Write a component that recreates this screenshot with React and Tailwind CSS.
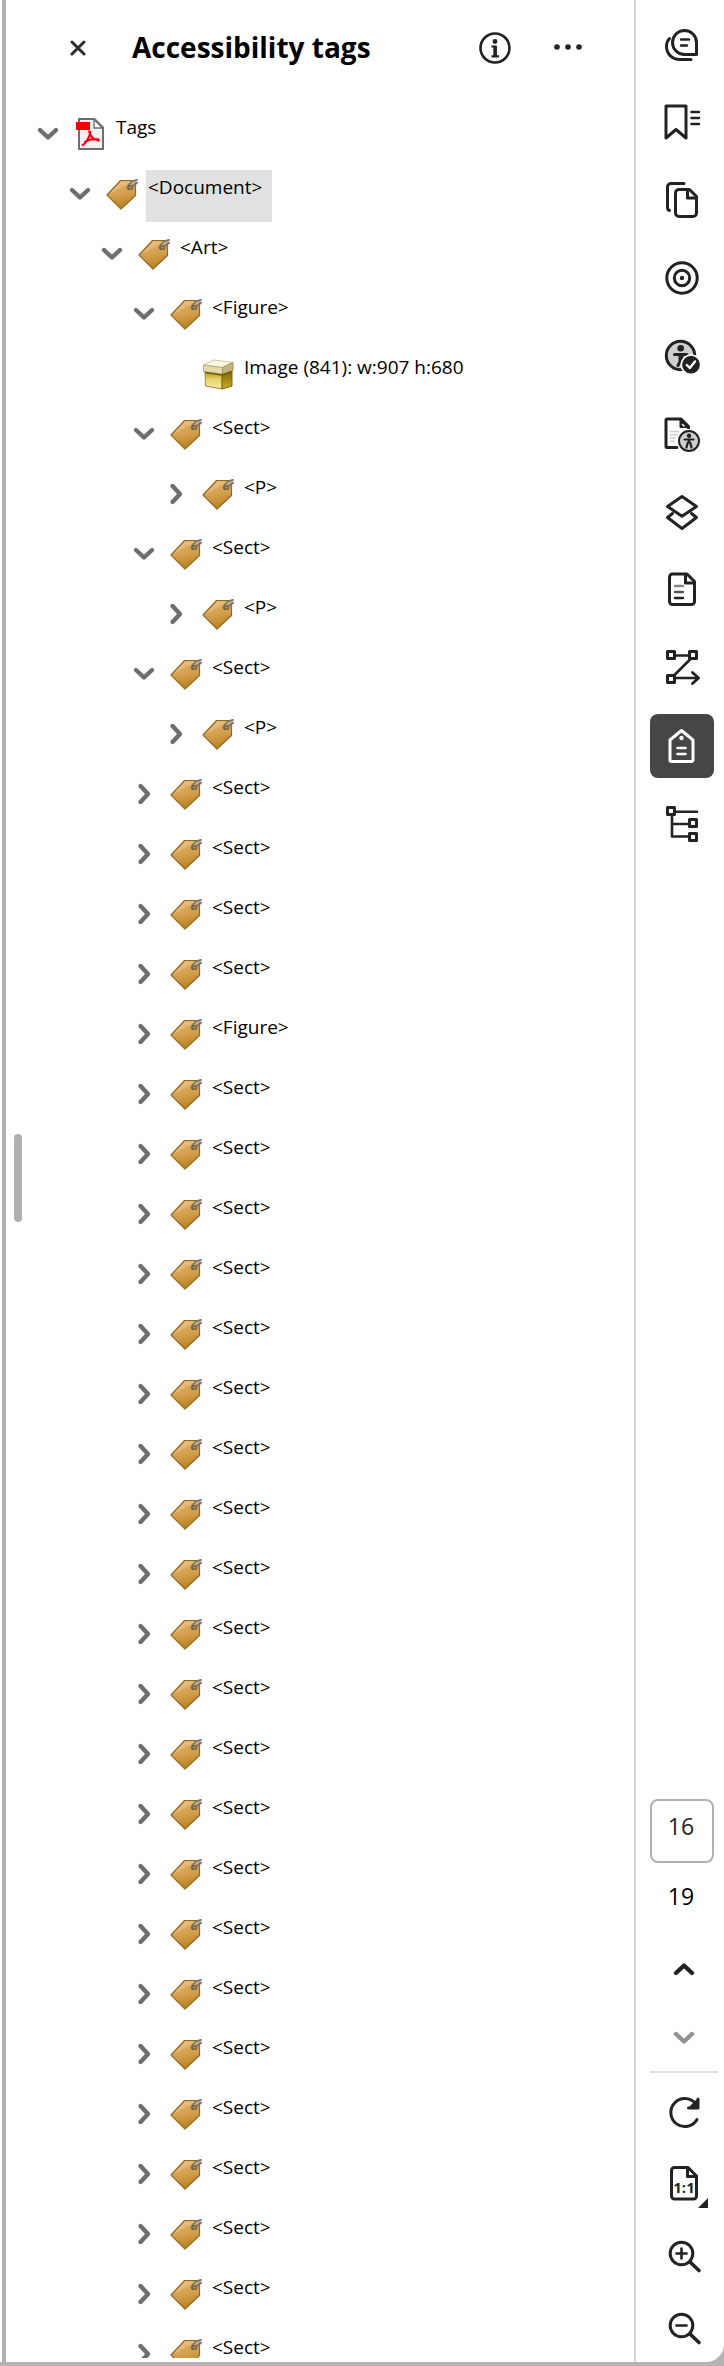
import { useState } from 'react';

const INDENT = ['pl-[10px]', 'pl-[42px]', 'pl-[74px]', 'pl-[106px]', 'pl-[138px]'];

const sects = (count) =>
  Array.from({ length: count }, () => ({ level: 3, label: '<Sect>', state: 'closed' }));

const rows = [
  { level: 0, label: 'Tags', state: 'open', icon: 'pdf' },
  { level: 1, label: '<Document>', state: 'open' },
  { level: 2, label: '<Art>', state: 'open' },
  { level: 3, label: '<Figure>', state: 'open' },
  { level: 4, label: 'Image (841): w:907 h:680', icon: 'box' },
  { level: 3, label: '<Sect>', state: 'open' },
  { level: 4, label: '<P>', state: 'closed' },
  { level: 3, label: '<Sect>', state: 'open' },
  { level: 4, label: '<P>', state: 'closed' },
  { level: 3, label: '<Sect>', state: 'open' },
  { level: 4, label: '<P>', state: 'closed' },
  ...sects(4),
  { level: 3, label: '<Figure>', state: 'closed' },
  ...sects(22),
];

const Chevron = ({ direction = 'down', className = '' }) => {
  const paths = {
    down: 'M8 12l8 7.5 8-7.5',
    up: 'M8 20l8-7.5 8 7.5',
    right: 'M12.5 8l7.5 8-7.5 8',
  };
  return (
    <svg viewBox="0 0 32 32" className={`size-8 ${className}`} fill="none" stroke="currentColor" strokeWidth="4.4" strokeLinecap="round" strokeLinejoin="round" aria-hidden="true">
      <path d={paths[direction]} />
    </svg>
  );
};

const TagIcon = () => (
  <svg viewBox="0 0 32 32" className="size-8" aria-hidden="true">
    <path d="M14.5 2.500H29.500V17.500L15 31 1 17z" fill="url(#tagFill)" stroke="#94691f" strokeWidth="1.200" strokeLinejoin="round" />
    <path d="M15 3.500H26L3 16.500z" fill="#f6d7a2" opacity="0.350" />
    <ellipse cx="24" cy="9.500" rx="3.200" ry="2.600" fill="#7d6136" />
    <circle cx="24.500" cy="9.500" r="1.100" fill="#e0cfa6" />
    <path d="M22.500 7L26 3.200 31 1.800M25 9L31.300 4.800" fill="none" stroke="#77736a" strokeWidth="1.800" strokeLinecap="round" />
    <path d="M25.500 6L30.500 3.200" stroke="#bab6ab" strokeWidth="1.200" />
  </svg>
);

const PdfIcon = () => (
  <svg viewBox="0 0 32 32" className="size-8" aria-hidden="true">
    <path d="M5 1H20.500L29 9.500V31H5z" fill="#f1f1f1" stroke="#6e6e6e" strokeWidth="2" />
    <path d="M20 1.500V10H28.500z" fill="#fff" stroke="#6e6e6e" strokeWidth="1.300" />
    <rect x="2" y="4" width="14" height="8" fill="#f50000" />
    <path d="M15 12.500C15.500 17 19 21.500 25.500 23M16.500 13C16 19 12 25.500 8 27.500M10.500 24.500C14 21.500 19 20.500 25.500 21.500" fill="none" stroke="#f5000f" strokeWidth="2.200" />
  </svg>
);

const BoxIcon = () => (
  <svg viewBox="0 0 32 32" className="size-8" aria-hidden="true">
    <path d="M3 13L20 16V31L3.500 28z" fill="url(#boxFront)" stroke="#a08a2c" strokeWidth="1" />
    <path d="M20 16L30 13V28L20 31z" fill="url(#boxSide)" stroke="#7d680f" strokeWidth="1" />
    <path d="M1.500 7L12 2 31 4.500 20.500 9.500z" fill="#faf8e2" stroke="#cfc79c" strokeWidth="1" />
    <path d="M1.500 7L20.500 9.500V16L1.500 13.500z" fill="#e3daae" stroke="#b8ac78" strokeWidth="1" />
    <path d="M20.500 9.500L31 4.500V12.500L20.500 16z" fill="#c4b67c" stroke="#a4955c" strokeWidth="1" />
    <path d="M3 14.500L20 17 30 13.500" fill="none" stroke="#6d5c14" strokeWidth="1.400" />
  </svg>
);

const IconDefs = () => (
  <svg width="0" height="0" className="absolute" aria-hidden="true">
    <defs>
      <linearGradient id="tagFill" x1="0" y1="0" x2="0.25" y2="1">
        <stop offset="0" stopColor="#e2b573" />
        <stop offset="0.55" stopColor="#d4a04f" />
        <stop offset="1" stopColor="#bd851f" />
      </linearGradient>
      <linearGradient id="boxFront" x1="0" y1="0" x2="0" y2="1">
        <stop offset="0" stopColor="#a98a12" />
        <stop offset="0.45" stopColor="#e5d267" />
        <stop offset="1" stopColor="#f4eca6" />
      </linearGradient>
      <linearGradient id="boxSide" x1="0" y1="0" x2="0" y2="1">
        <stop offset="0" stopColor="#7c6405" />
        <stop offset="1" stopColor="#cfae22" />
      </linearGradient>
    </defs>
  </svg>
);

const icons = { pdf: PdfIcon, box: BoxIcon };

const TreeRow = ({ row, selected, onSelect }) => {
  const Icon = icons[row.icon] || TagIcon;
  return (
    <li
      role="treeitem"
      aria-level={row.level + 1}
      aria-selected={selected}
      aria-expanded={row.state ? row.state === 'open' : undefined}
      className={`flex h-[52px] shrink-0 items-start ${INDENT[row.level]}`}
    >
      <span className="mt-2 mr-[10px] size-8 shrink-0">
        {row.state && (
          <button type="button" aria-label={`Toggle ${row.label}`} className="block text-[#6e6e6e]">
            <Chevron direction={row.state === 'open' ? 'down' : 'right'} />
          </button>
        )}
      </span>
      <span className="mt-2 mr-2 shrink-0">
        <Icon />
      </span>
      <button
        type="button"
        onClick={onSelect}
        className={`flex h-full items-start pt-[6px] pr-[10px] pl-[2px] text-[19px] leading-[22px] whitespace-nowrap ${selected ? 'bg-[#e1e1e1]' : ''}`}
      >
        {row.label}
      </button>
    </li>
  );
};

const RailIcon = ({ children }) => (
  <svg viewBox="0 0 40 40" className="size-10" fill="none" stroke="currentColor" strokeWidth="3" strokeLinecap="round" strokeLinejoin="round" aria-hidden="true">
    {children}
  </svg>
);

const tools = [
  {
    name: 'Comments',
    icon: (
      <>
        <path d="M22.5 6.5a12 12 0 0 1 12 12v12h-12a12 12 0 0 1 0-24z" />
        <path d="M7.5 14.5C5.5 16.5 4.5 19.5 4.5 22.5c0 7.5 6 13 13.5 13H29" />
        <path d="M19 15.5h8M19 21.5h6" strokeWidth="2.4" />
      </>
    ),
  },
  {
    name: 'Bookmarks',
    icon: (
      <>
        <path d="M4 4h20v32l-10-8.5L4 36z" />
        <path d="M29.5 10h7.5M29.5 16h7.5M29.5 22h7.5" strokeWidth="2.6" />
      </>
    ),
  },
  {
    name: 'Pages',
    icon: (
      <>
        <path d="M22 3.5H9a3.5 3.5 0 0 0-3.5 3.5v20.5c0 1.500.8 2.700 2 3" />
        <path d="M17 9.500h10.500l7 7V33a3.500 3.500 0 0 1-3.500 3.500H17a3.500 3.500 0 0 1-3.500-3.500V13a3.500 3.500 0 0 1 3.500-3.500z" />
        <path d="M25.500 10v8h8.500" />
      </>
    ),
  },
  {
    name: 'Destinations',
    icon: (
      <>
        <circle cx="20" cy="20" r="15.2" />
        <circle cx="20" cy="20" r="7.7" />
        <circle cx="20" cy="20" r="2.2" fill="currentColor" stroke="none" />
      </>
    ),
  },
  {
    name: 'Accessibility checker',
    icon: (
      <>
        <circle cx="18.5" cy="19.500" r="14.2" fill="#cfcfcf" />
        <circle cx="18.7" cy="12.300" r="3.300" fill="currentColor" stroke="none" />
        <path d="M12.500 18.500h12.500M19 19.500v4l-3 6" strokeWidth="3" />
        <path d="M16.500 18.500h5v6h-5z" fill="currentColor" stroke="none" />
        <circle cx="29" cy="28.700" r="9.700" fill="#222" stroke="#fff" strokeWidth="1.600" />
        <path d="M24.800 29l3 3 5.200-6.500" stroke="#fff" strokeWidth="2.400" />
      </>
    ),
  },
  {
    name: 'Document accessibility',
    icon: (
      <>
        <path d="M15 33.500H5a1 1 0 0 1-1-1V6a1 1 0 0 1 1-1h14l7.500 7.500V14" />
        <path d="M18.500 6v7H26z" fill="#222" strokeWidth="2" />
        <path d="M20.500 10.500l1.600 1.500" stroke="#fff" strokeWidth="1.500" />
        <path d="M8.500 17.500h8M8.500 20.700h7M8.500 24h5M8.500 27.300h4" stroke="#cfcfcf" strokeWidth="1.500" />
        <circle cx="27" cy="27" r="12" fill="#fff" stroke="none" />
        <circle cx="27" cy="27" r="10" fill="#cfcfcf" strokeWidth="2" />
        <circle cx="27" cy="21.800" r="2.200" fill="currentColor" stroke="none" />
        <path d="M22.500 25.500h9M27 26v2.500M25.800 28.500l-1.300 5M28.200 28.500l1.300 5" strokeWidth="2.200" />
      </>
    ),
  },
  {
    name: 'Layers',
    icon: (
      <>
        <path d="M20 4.500l14.500 10L20 24.300 5.500 14.500z" />
        <path d="M10.500 21.500l-5 4L20 36.500l14.500-11-5-4" />
      </>
    ),
  },
  {
    name: 'Content',
    icon: (
      <>
        <path d="M10.500 4H25l7.500 7.500v20a3 3 0 0 1-3 3h-19a3 3 0 0 1-3-3V7a3 3 0 0 1 3-3z" />
        <path d="M23.500 4.500V13H32" />
        <path d="M13 16h8" stroke="#888" strokeWidth="2.400" />
        <path d="M13 22h8" stroke="#555" strokeWidth="2.400" />
        <path d="M13 28h8" strokeWidth="2.400" />
      </>
    ),
  },
  {
    name: 'Reading order',
    icon: (
      <>
        <path d="M13 7.500h14M28.500 11L12 27.500M13 30h22" strokeWidth="2.600" />
        <path d="M30.500 24.500l6 5.500-6 5.500" />
        <path d="M5.500 3.500h7v7h-7zM27.500 3.500h7v7h-7zM5.500 27.500h7v7h-7z" fill="#fff" />
      </>
    ),
  },
  {
    name: 'Accessibility tags',
    active: true,
    icon: (
      <>
        <path d="M8 14L19.500 4.500 31 14v20a1.500 1.500 0 0 1-1.500 1.500h-20A1.500 1.500 0 0 1 8 34z" />
        <circle cx="19.500" cy="12" r="2.200" fill="currentColor" stroke="none" />
        <path d="M15.500 22h8M15.500 28h8" strokeWidth="2.600" />
      </>
    ),
  },
  {
    name: 'Structure',
    icon: (
      <>
        <path d="M13 7.700h22M10 11v21.500h17M10 20h17" strokeWidth="2.600" />
        <path d="M5.500 3.500h7v7h-7zM27.500 15.500h7v7h-7zM27.500 29.500h7v7h-7z" fill="#fff" />
      </>
    ),
  },
];

const railButton = 'flex size-16 shrink-0 items-center justify-center rounded-lg';

const ToolRail = () => {
  const [page, setPage] = useState('16');

  return (
    <aside className="flex w-[90px] shrink-0 flex-col border-l-2 border-[#d3d3d3] pl-[14px] text-[#222]">
      <nav aria-label="Panels" className="flex flex-col gap-[14px] pt-3">
        {tools.map((tool) => (
          <button
            key={tool.name}
            type="button"
            aria-label={tool.name}
            aria-pressed={!!tool.active}
            className={`${railButton} ${tool.active ? 'bg-[#464646] text-white' : ''}`}
          >
            <RailIcon>{tool.icon}</RailIcon>
          </button>
        ))}
      </nav>

      <div className="mt-auto flex flex-col pb-[2px]">
        <input
          aria-label="Current page"
          value={page}
          onChange={(e) => setPage(e.target.value)}
          className="size-16 rounded-lg border-2 border-[#b1b1b1] pr-[2px] pb-[10px] text-center text-[23px]"
        />
        <p className="flex h-[66px] w-16 items-center justify-center pr-[2px] text-[23px] text-black">19</p>
        <button type="button" aria-label="Previous page" className="flex h-20 w-[68px] items-center justify-center">
          <Chevron direction="up" />
        </button>
        <button type="button" aria-label="Next page" className="flex h-[58px] w-[68px] items-center justify-center text-[#929292]">
          <Chevron />
        </button>
        <hr className="mt-1 mr-[6px] mb-[7px] border-t-2 border-[#e1e1e1]" />
        <div className="flex flex-col items-start gap-2 pl-[2px]">
          <button type="button" aria-label="Rotate" className={railButton}>
            <RailIcon>
              <path d="M33 27.500A14 14 0 1 1 31.500 11.500" />
              <path d="M34 7v9h-9.500" />
              <path d="M33 9v6h-6z" fill="currentColor" />
            </RailIcon>
          </button>
          <button type="button" aria-label="Actual size" className={`${railButton} relative`}>
            <RailIcon>
              <path d="M10.500 3.500H24l8.500 8.500v20a3 3 0 0 1-3 3h-19a3 3 0 0 1-3-3V6.500a3 3 0 0 1 3-3z" />
              <path d="M23.500 4v8.500H32" />
              <text x="20" y="28.500" textAnchor="middle" fontSize="15" fontWeight="700" fill="currentColor" stroke="none">1:1</text>
            </RailIcon>
            <svg viewBox="0 0 10 10" className="absolute right-2 bottom-2 size-[10px]" fill="currentColor" aria-hidden="true">
              <path d="M10 0v10H0z" />
            </svg>
          </button>
          <button type="button" aria-label="Zoom in" className={railButton}>
            <RailIcon>
              <circle cx="17.500" cy="17.500" r="11.300" />
              <path d="M26 26l9 8.500" strokeWidth="3.600" />
              <path d="M12.500 17.500h10M17.500 12.500v10" strokeWidth="2.600" />
            </RailIcon>
          </button>
          <button type="button" aria-label="Zoom out" className={railButton}>
            <RailIcon>
              <circle cx="17.500" cy="17.500" r="11.300" />
              <path d="M26 26l9 8.500" strokeWidth="3.600" />
              <path d="M12.500 17.500h10" strokeWidth="2.600" />
            </RailIcon>
          </button>
        </div>
      </div>
    </aside>
  );
};

export default function App() {
  const [selected, setSelected] = useState(1);

  return (
    <div className="h-screen overflow-hidden bg-[#b4b4b4] pb-1 font-['Open_Sans','Noto_Sans',sans-serif] text-black">
      <IconDefs />
      <div className="flex h-full rounded-br-[18px] bg-white pl-[2px]">
        <div className="flex min-w-0 flex-1 border-l-4 border-[#b0b0b0]">
          <div className="flex w-4 shrink-0 items-center justify-end pb-[6px]">
            <span className="h-[88px] w-2 rounded-full bg-[#b0b0b0]" />
          </div>

          <main className="flex min-w-0 flex-1 flex-col pb-1">
            <header className="flex h-[110px] shrink-0 items-start pt-6 pl-8">
              <button type="button" aria-label="Close" className="flex size-12 items-center justify-center">
                <svg viewBox="0 0 16 16" className="size-4" fill="none" stroke="#2c2c2c" strokeWidth="3" strokeLinecap="round" aria-hidden="true">
                  <path d="M2 2l12 12M14 2L2 14" />
                </svg>
              </button>
              <h1 className="ml-[30px] flex-1 text-[28px] leading-[46px] font-bold whitespace-nowrap">Accessibility tags</h1>
              <button type="button" aria-label="Information" className="flex size-12 items-center justify-center text-[#222]">
                <svg viewBox="0 0 32 32" className="size-8" fill="none" stroke="currentColor" strokeWidth="2.600" aria-hidden="true">
                  <circle cx="16" cy="16" r="14.500" />
                  <circle cx="16" cy="9.500" r="2.400" fill="currentColor" stroke="none" />
                  <path d="M12.500 14.500H16.500V24M12.500 24.300h7.500" strokeWidth="2.200" />
                  <path d="M14.300 14h3.600v10h-3.600z" fill="currentColor" stroke="none" />
                </svg>
              </button>
              <button type="button" aria-label="More options" className="mr-[42px] ml-[25px] flex size-12 items-center justify-center text-[#222]">
                <svg viewBox="0 0 32 32" className="size-8" fill="currentColor" aria-hidden="true">
                  <circle cx="5" cy="15" r="2.800" />
                  <circle cx="16" cy="15" r="2.800" />
                  <circle cx="27" cy="15" r="2.800" />
                </svg>
              </button>
            </header>

            <ul role="tree" aria-label="Accessibility tags" className="flex min-h-0 flex-1 flex-col gap-2 overflow-hidden">
              {rows.map((row, i) => (
                <TreeRow key={i} row={row} selected={i === selected} onSelect={() => setSelected(i)} />
              ))}
            </ul>
          </main>
        </div>
        <ToolRail />
      </div>
    </div>
  );
}
